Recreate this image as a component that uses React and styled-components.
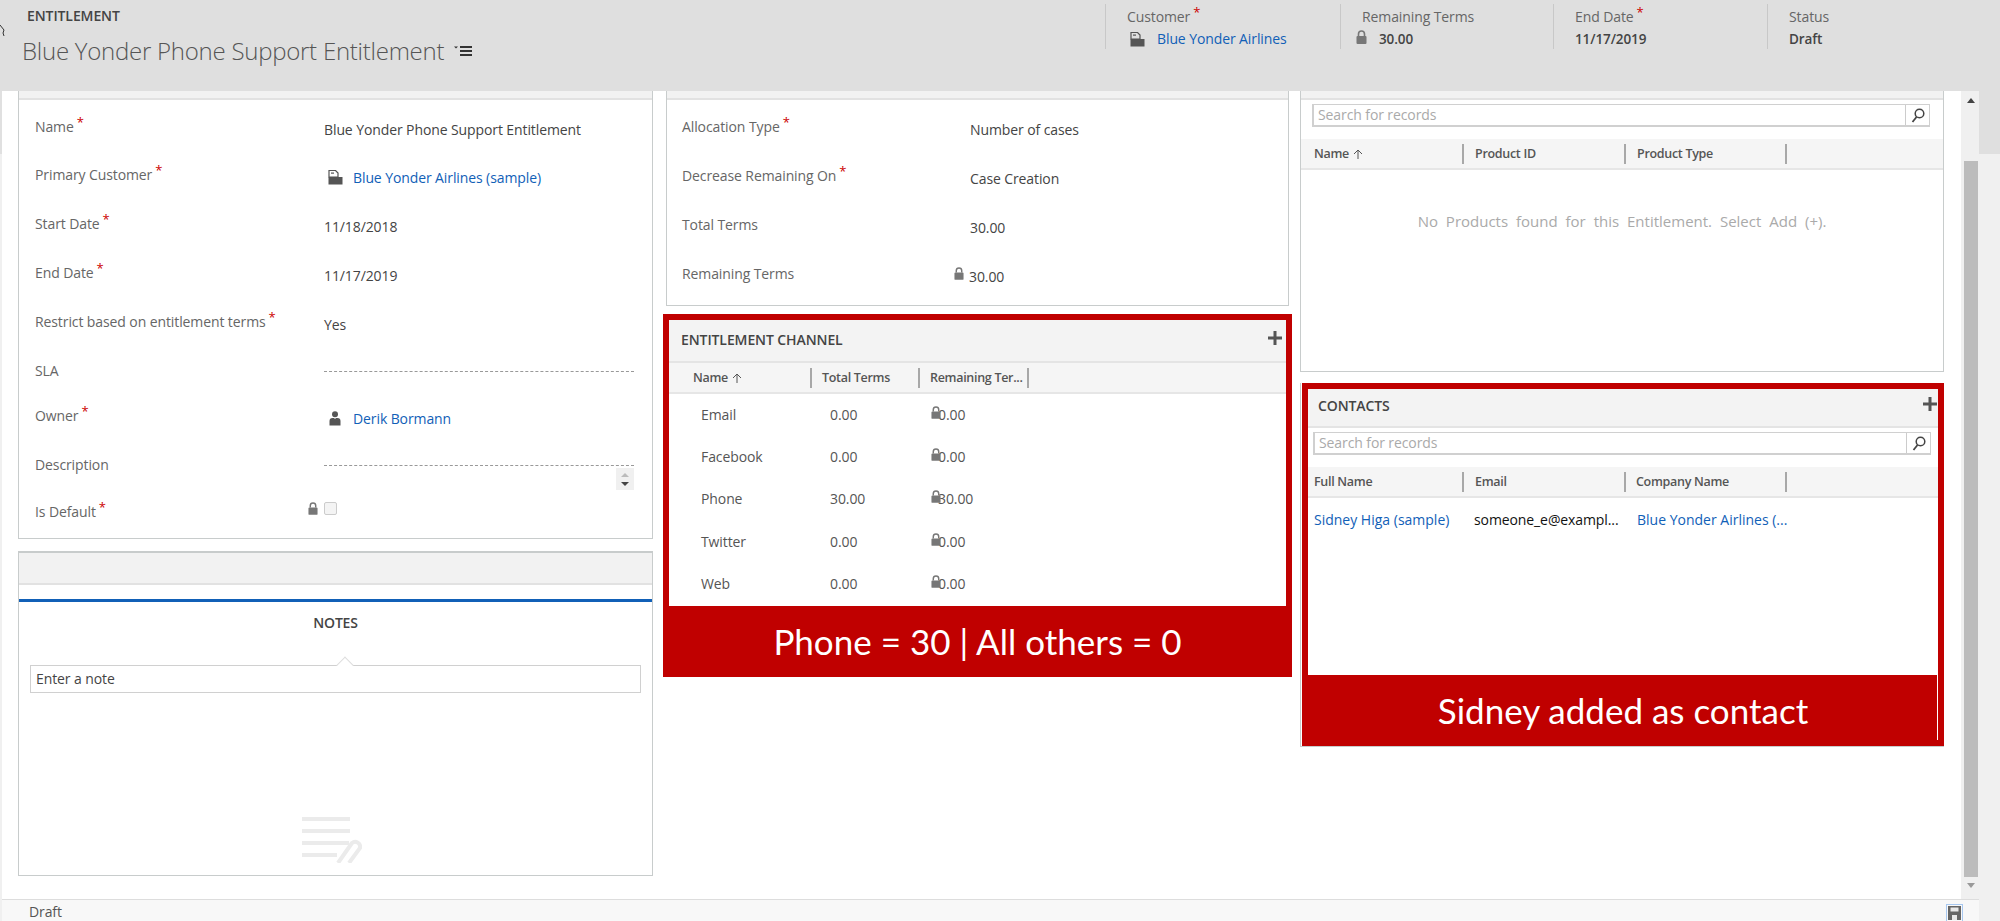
import React from 'react';
import styled, { createGlobalStyle } from 'styled-components';

const Global = createGlobalStyle`
  html, body { margin: 0; padding: 0; background: #fff; overflow: hidden; }
  * { box-sizing: border-box; }
  body { font-family: "Open Sans", "Noto Sans", sans-serif; font-size: 14px; color: #444; }
`;

const Page = styled.div`width: 2000px; height: 921px; display: flex; flex-direction: column; overflow: hidden;`;
const Header = styled.header`height: 91px; flex: none; background: #dfdfdf; display: flex; justify-content: space-between; position: relative;`;
const HeaderLeft = styled.div`padding: 7px 0 0 22px;`;
const EntityType = styled.div`font-size: 14px; font-weight: 600; color: #444; line-height: 18px; padding-left: 5px; letter-spacing: -0.1px;`;
const TitleRow = styled.div`display: flex; align-items: center; gap: 10px; margin-top: 9px;`;
const Title = styled.h1`margin: 0; font-size: 24px; font-weight: 300; color: #555; line-height: 34px; letter-spacing: -0.25px;`;
const HeaderFields = styled.div`display: flex; padding-top: 4px; height: 49px;`;
const HeaderField = styled.div`width: ${p => p.$w}px; border-left: 1px solid #c8c8c8; padding-left: 21px;`;
const HeaderLabel = styled.div`font-size: 14px; color: #666; line-height: 18px; margin-top: 4px; letter-spacing: -0.1px;`;
const HeaderValue = styled.div`display: flex; align-items: center; font-size: 13.5px; font-weight: 600; color: #444; line-height: 20px; margin-top: 3px; letter-spacing: -0.1px;`;
const HeaderLink = styled.span`font-weight: 400; font-size: 14px; color: #1160b7; margin-left: 12px;`;
const HeaderIcon = styled.span`display: flex; margin-left: 3px;`;
const HeaderLock = styled.span`display: flex; margin: -5px 12px 0 -6px;`;
const Req = styled.sup`color: #c00; font-size: 13px; line-height: 0; margin-left: 3px; font-weight: 400; vertical-align: 5px;`;
const Cursor = styled.svg`position: absolute; left: 0; top: 25px;`;

const Shell = styled.div`flex: 1; min-height: 0; display: flex;`;
const Strip = styled.div`width: 2px; flex: none; background: linear-gradient(#e0e0e0 0 63px, #f0f0f0 63px);`;
const Center = styled.div`flex: 1; min-width: 0; display: flex; flex-direction: column;`;
const Gutter = styled.div`width: 21px; flex: none; background: linear-gradient(#dfdfdf 0 63px, #f0f0f0 63px);`;
const Scroller = styled.div`flex: 1; min-height: 0; display: flex;`;
const Content = styled.main`flex: 1; min-width: 0; display: flex; padding-left: 16px; overflow: hidden;`;
const Column = styled.div`width: ${p => p.$w}px; flex: none; display: flex; flex-direction: column; margin-left: ${p => p.$ml || 0}px;`;

const ScrollTrack = styled.div`width: 18px; flex: none; background: #f0f0f0; display: flex; flex-direction: column; align-items: center; padding-left: 1px;`;
const ScrollThumb = styled.div`width: 14px; height: 716px; background: #bcbcbc; margin-top: 58px;`;
const ArrowUp = styled.div`margin-top: 7px; width: 0; height: 0; border-left: 4px solid transparent; border-right: 4px solid transparent; border-bottom: 5px solid #444;`;
const ArrowDown = styled.div`margin-top: 6px; width: 0; height: 0; border-left: 4px solid transparent; border-right: 4px solid transparent; border-top: 5px solid #999;`;

const Status = styled.footer`height: 22px; flex: none; background: #f8f8f8; border-top: 1px solid #ddd; display: flex; justify-content: space-between; padding: 0 16px 0 27px; font-size: 14px; line-height: 24px; color: #555; letter-spacing: -0.1px;`;
const SaveBtn = styled.div`width: 17px; height: 18px; margin-top: 4px; border: 1px solid #a8c8f0; display: flex; align-items: center; justify-content: center;`;

const Panel = styled.section`border: 1px solid #c8cccc; border-top: none; background: #fff; height: ${p => p.$h}px; flex: none; overflow: hidden;`;
const TopBar = styled.div`height: 9px; background: #f2f2f2; border-bottom: 2px solid #e2e2e2;`;
const Form = styled.div`padding: 17px 0 0 ${p => p.$pl}px;`;
const Row = styled.div`display: grid; grid-template-columns: ${p => p.$label}px 1fr; height: ${p => p.$h || 49}px;`;
const Label = styled.div`font-size: 14px; color: #666; line-height: 20px; letter-spacing: -0.1px; white-space: nowrap;`;
const Value = styled.div`display: flex; align-items: center; gap: ${p => p.$gap || 0}px; height: 20px; margin-top: 2px; font-size: 14px; color: #444; letter-spacing: -0.1px; position: relative; margin-left: ${p => p.$ml || 0}px;`;
const Link = styled.span`color: #1160b7;`;
const Dashed = styled.div`border-top: 1px dashed #999; height: 0; margin: 10px 18px 0 0;`;
const Spinner = styled.div`position: absolute; right: 18px; top: 13px; width: 18px; height: 22px; background: #f0f0f0; display: flex; flex-direction: column; align-items: center; gap: 5px; padding-top: 5px;`;
const SpinUp = styled.div`width: 0; height: 0; border-left: 4px solid transparent; border-right: 4px solid transparent; border-bottom: 4px solid #bbb;`;
const SpinDown = styled.div`width: 0; height: 0; border-left: 4px solid transparent; border-right: 4px solid transparent; border-top: 4px solid #444;`;
const Check = styled.div`width: 13px; height: 13px; border: 1px solid #ccc; border-radius: 2px; background: #f4f4f4; margin-top: -11px;`;
const LabelLock = styled.div`display: flex; justify-content: space-between; padding-right: 6px;`;
const DescField = styled.div`position: relative;`;
const LockLift = styled.span`display: flex; margin-top: -6px;`;

const NotesPanel = styled.section`margin-top: 12px; height: 325px; flex: none; border: 1px solid #c8cccc; border-top-width: 2px; background: #fff;`;
const NotesHead = styled.div`height: 32px; background: #f2f2f2; border-bottom: 2px solid #e2e2e2;`;
const NotesTabLine = styled.div`height: 3px; background: #1160b7; margin-top: 14px;`;
const NotesTitle = styled.div`text-align: center; font-size: 14px; font-weight: 600; color: #444; line-height: 18px; margin-top: 12px; letter-spacing: -0.2px;`;
const NotesInputWrap = styled.div`margin: 33px 11px 0; position: relative;`;
const NotesInput = styled.div`height: 28px; border: 1px solid #d0d0d0; padding-left: 5px; font-size: 14px; line-height: 26px; color: #444; letter-spacing: -0.1px;`;
const Notch = styled.div`position: absolute; left: 309px; top: -6px; width: 12px; height: 12px; background: #fff; border-left: 1px solid #ddd; border-top: 1px solid #ddd; transform: rotate(45deg);`;
const NotesIconWrap = styled.div`display: flex; justify-content: center; margin-top: 124px; padding-right: 7px;`;

const Callout = styled.section`margin: ${p => p.$top}px ${p => p.$right}px 0 ${p => p.$left}px; height: ${p => p.$h}px; flex: none; background: #c00000; padding: 6px 6px 0; display: flex; flex-direction: column;`;
const CalloutBody = styled.div`flex: 1; min-height: 0; background: #fff;`;
const CalloutCaption = styled.div`height: 71px; margin: 0 -6px; padding-bottom: 2px; display: flex; align-items: center; justify-content: center; color: #fff; font-family: Lato, sans-serif; font-size: 35px; flex: none;`;
const SubHead = styled.div`height: ${p => p.$h}px; background: #f3f3f3; border-bottom: 2px solid #e4e4e4; display: flex; justify-content: space-between; padding: ${p => p.$pt}px ${p => p.$pr}px 0 ${p => p.$pl}px;`;
const SubTitle = styled.div`font-size: 14px; font-weight: 600; color: #444; line-height: 18px; letter-spacing: -0.1px;`;
const PlusBtn = styled.div`width: 14px; height: 14px; margin-top: ${p => p.$mt}px;`;

const ColHead = styled.div`height: 31px; background: #f5f5f5; border-bottom: 2px solid #e6e6e6; display: flex; align-items: center; margin-top: ${p => p.$mt || 0}px; margin-bottom: ${p => p.$mb || 0}px;`;
const ColCell = styled.div`width: ${p => p.$w}px; height: 20px; border-right: 2px solid #a8a8a8; padding-left: ${p => p.$pl || 0}px; display: flex; align-items: center; gap: 4px; font-size: 12.5px; font-weight: 600; color: #555; letter-spacing: -0.3px; white-space: nowrap;`;

const ChannelRow = styled.div`display: flex; height: 42.4px; align-items: center; font-size: 14px; color: #555; letter-spacing: -0.1px;`;
const RowName = styled.div`width: 161px; padding-left: 32px;`;
const RowTotal = styled.div`width: 101px;`;
const RowRemain = styled.div`display: flex; align-items: center;`;
const OverLock = styled.span`display: block; width: 7px; height: 13px; margin-top: -8px; position: relative; z-index: 1;`;

const SearchBar = styled.div`margin: 4px ${p => p.$mr}px 0 ${p => p.$ml}px; height: 23px; border: solid #d0d0d0; border-width: 1px 1px 2px 2px; display: flex; background: #fff;`;
const SearchHint = styled.div`flex: 1; font-size: 14px; color: #aaa; line-height: 20px; padding-left: 4px; letter-spacing: -0.1px;`;
const SearchBtn = styled.div`width: 24px; border-left: 1px solid #ccc; display: flex; align-items: center; justify-content: center; background: #fff;`;
const Empty = styled.div`text-align: center; font-size: 15px; color: #aaa; margin-top: 42px; line-height: 18px; word-spacing: 4px;`;
const ContactRow = styled.div`display: flex; height: 42px; align-items: center; font-size: 14px; letter-spacing: -0.1px; padding-left: 6px;`;
const ContactCell = styled.div`width: ${p => p.$w}px; color: ${p => p.$link ? '#1160b7' : '#111'}; white-space: nowrap; letter-spacing: ${p => p.$link ? 0 : -0.1}px;`;
const ContactsFrame = styled.div`position: relative; margin-top: 11px; border-left: 1px solid #c8cccc; border-bottom: 1px solid #c8cccc;`;
const RightLine = styled.div`position: absolute; right: 6px; bottom: 6px; width: 1px; height: 65px; background: #fff;`;

const Lock = ({ w = 11, h = 14, c = '#777' }) => (
  <svg width={w} height={h} viewBox="0 0 11 14"><path d="M2.5 6V4a3 3 0 0 1 6 0v2" fill="none" stroke={c} strokeWidth="1.6" /><rect x="0.5" y="6" width="10" height="8" rx="1" fill={c} /></svg>
);
const Building = ({ c = '#555' }) => (
  <svg width="15" height="15" viewBox="0 0 15 15"><path d="M1 0.5h6.5l2.5 2.5v4H1z" fill="none" stroke={c} strokeWidth="1.2" /><rect x="3" y="2.5" width="3" height="1.2" fill={c} /><rect x="0.5" y="7" width="14" height="7.5" fill={c} /></svg>
);
const User = () => (
  <svg width="12" height="15" viewBox="0 0 12 15"><circle cx="6" cy="3.2" r="3" fill="#555" /><path d="M0.5 14.5V10a3 3 0 0 1 3-3H5l1 1 1-1h1.5a3 3 0 0 1 3 3v4.5z" fill="#555" /></svg>
);
const ListIcon = () => (
  <svg width="19" height="12" viewBox="0 0 19 12"><path d="M0 1.5h4L2 3.5z" fill="#333" /><rect x="6" y="1" width="12" height="2" fill="#333" /><rect x="6" y="5" width="12" height="2" fill="#333" /><rect x="6" y="9" width="12" height="2" fill="#333" /></svg>
);
const Plus = () => (
  <svg width="14" height="14" viewBox="0 0 14 14"><path d="M5.5 0h3v5.5H14v3H8.5V14h-3V8.5H0v-3h5.5z" fill="#555" /></svg>
);
const Search = () => (
  <svg width="14" height="15" viewBox="0 0 14 15"><circle cx="8.5" cy="5.5" r="4.3" fill="none" stroke="#444" strokeWidth="1.5" /><path d="M5.5 9L1.5 14" stroke="#444" strokeWidth="1.8" /></svg>
);
const SortArrow = () => (
  <svg width="10" height="10" viewBox="0 0 10 10"><path d="M5 10V1M1 5l4-4 4 4" fill="none" stroke="#555" strokeWidth="1" /></svg>
);
const Save = () => (
  <svg width="13" height="14" viewBox="0 0 13 14"><path d="M0 0h13v14H0z" fill="#666" /><rect x="2.5" y="1.5" width="8" height="4" fill="#e8e8e8" /><rect x="4" y="9" width="5" height="5" fill="#e8e8e8" /></svg>
);
const NoteGlyph = () => (
  <svg width="60" height="46" viewBox="0 0 60 46"><g fill="#ebebeb"><rect x="0" y="0" width="48" height="4" /><rect x="0" y="12" width="48" height="4" /><rect x="0" y="24" width="47" height="4" /><rect x="0" y="36" width="35" height="4" /></g><path d="M36 46l14-20a5 5 0 0 1 8 5L47 46" fill="none" stroke="#ebebeb" strokeWidth="4" /></svg>
);

const leftRows = [
  { label: 'Name', req: true, value: 'Blue Yonder Phone Support Entitlement', h: 48 },
  { label: 'Primary Customer', req: true, link: 'Blue Yonder Airlines (sample)', icon: <Building />, h: 49, ml: 4, gap: 10 },
  { label: 'Start Date', req: true, value: '11/18/2018', h: 49 },
  { label: 'End Date', req: true, value: '11/17/2019', h: 49 },
  { label: 'Restrict based on entitlement terms', req: true, value: 'Yes', h: 49 },
  { label: 'SLA', dashed: true, h: 45 },
  { label: 'Owner', req: true, link: 'Derik Bormann', icon: <User />, h: 49, ml: 5, gap: 12 },
  { label: 'Description', dashed: true, spin: true, h: 47 },
];
const midRows = [
  { label: 'Allocation Type', req: true, value: 'Number of cases' },
  { label: 'Decrease Remaining On', req: true, value: 'Case Creation' },
  { label: 'Total Terms', value: '30.00' },
];
const channels = [['Email', '0.00'], ['Facebook', '0.00'], ['Phone', '30.00'], ['Twitter', '0.00'], ['Web', '0.00']];
const headerFields = [
  { w: 235, label: 'Customer', req: true, value: <><HeaderIcon><Building /></HeaderIcon><HeaderLink>Blue Yonder Airlines</HeaderLink></> },
  { w: 213, label: 'Remaining Terms', value: <><HeaderLock><Lock w={11} h={14} /></HeaderLock>30.00</> },
  { w: 214, label: 'End Date', req: true, value: '11/17/2019' },
  { w: 233, label: 'Status', value: 'Draft' },
];

const FormRow = ({ r, labelW }) => (
  <Row $label={labelW} $h={r.h}>
    <Label>{r.label}{r.req && <Req>*</Req>}</Label>
    {r.dashed ? (
      <DescField><Dashed />{r.spin && <Spinner><SpinUp /><SpinDown /></Spinner>}</DescField>
    ) : (
      <Value $gap={r.gap} $ml={r.ml}>
        {r.icon}
        {r.link ? <Link>{r.link}</Link> : r.value}
      </Value>
    )}
  </Row>
);

export default function App() {
  return (
    <Page>
      <Global />
      <Header>
        <Cursor width="5" height="12" viewBox="0 0 5 12"><path d="M0 0l4 5-1 3 1 3" fill="none" stroke="#333" /></Cursor>
        <HeaderLeft>
          <EntityType>ENTITLEMENT</EntityType>
          <TitleRow><Title>Blue Yonder Phone Support Entitlement</Title><ListIcon /></TitleRow>
        </HeaderLeft>
        <HeaderFields>
          {headerFields.map(f => (
            <HeaderField key={f.label} $w={f.w}>
              <HeaderLabel>{f.label}{f.req && <Req>*</Req>}</HeaderLabel>
              <HeaderValue>{f.value}</HeaderValue>
            </HeaderField>
          ))}
        </HeaderFields>
      </Header>
      <Shell>
        <Strip />
        <Center>
          <Scroller>
            <Content>
              <Column $w={635}>
                <Panel $h={448}>
                  <TopBar />
                  <Form $pl={16}>
                    {leftRows.map(r => <FormRow key={r.label} r={r} labelW={289} />)}
                    <Row $label={289}>
                      <LabelLock><Label>Is Default<Req>*</Req></Label><Lock w={10} h={13} /></LabelLock>
                      <Value><Check /></Value>
                    </Row>
                  </Form>
                </Panel>
                <NotesPanel>
                  <NotesHead />
                  <NotesTabLine />
                  <NotesTitle>NOTES</NotesTitle>
                  <NotesInputWrap><NotesInput>Enter a note</NotesInput><Notch /></NotesInputWrap>
                  <NotesIconWrap><NoteGlyph /></NotesIconWrap>
                </NotesPanel>
              </Column>
              <Column $w={623} $ml={13}>
                <Panel $h={215}>
                  <TopBar />
                  <Form $pl={15}>
                    {midRows.map(r => <FormRow key={r.label} r={r} labelW={288} />)}
                    <Row $label={272}>
                      <Label>Remaining Terms</Label>
                      <Value $gap={5}><LockLift><Lock w={10} h={13} /></LockLift>30.00</Value>
                    </Row>
                  </Form>
                </Panel>
                <Callout $top={8} $left={-3} $right={-3} $h={363}>
                  <CalloutBody>
                    <SubHead $h={43} $pt={11} $pr={4} $pl={12}><SubTitle>ENTITLEMENT CHANNEL</SubTitle><PlusBtn $mt={-1}><Plus /></PlusBtn></SubHead>
                    <ColHead $mb={-1}>
                      <ColCell $w={143} $pl={24}>Name <SortArrow /></ColCell>
                      <ColCell $w={108} $pl={10}>Total Terms</ColCell>
                      <ColCell $w={109} $pl={10}>Remaining Ter...</ColCell>
                    </ColHead>
                    {channels.map(([n, v]) => (
                      <ChannelRow key={n}>
                        <RowName>{n}</RowName>
                        <RowTotal>{v}</RowTotal>
                        <RowRemain><OverLock><Lock w={10} h={13} /></OverLock>{v}</RowRemain>
                      </ChannelRow>
                    ))}
                  </CalloutBody>
                  <CalloutCaption>Phone = 30 | All others = 0</CalloutCaption>
                </Callout>
              </Column>
              <Column $w={644} $ml={11}>
                <Panel $h={281}>
                  <TopBar />
                  <SearchBar $ml={11} $mr={13}><SearchHint>Search for records</SearchHint><SearchBtn><Search /></SearchBtn></SearchBar>
                  <ColHead $mt={12}>
                    <ColCell $w={163} $pl={13}>Name <SortArrow /></ColCell>
                    <ColCell $w={162} $pl={11}>Product ID</ColCell>
                    <ColCell $w={161} $pl={11}>Product Type</ColCell>
                  </ColHead>
                  <Empty>No Products found for this Entitlement. Select Add (+).</Empty>
                </Panel>
                <ContactsFrame>
                  <Callout $top={0} $left={1} $right={0} $h={363}>
                    <CalloutBody>
                      <SubHead $h={39} $pt={8} $pr={1} $pl={10}><SubTitle>CONTACTS</SubTitle><PlusBtn $mt={-1}><Plus /></PlusBtn></SubHead>
                      <SearchBar $ml={5} $mr={7}><SearchHint>Search for records</SearchHint><SearchBtn><Search /></SearchBtn></SearchBar>
                      <ColHead $mt={12}>
                        <ColCell $w={156} $pl={6}>Full Name</ColCell>
                        <ColCell $w={162} $pl={11}>Email</ColCell>
                        <ColCell $w={161} $pl={10}>Company Name</ColCell>
                      </ColHead>
                      <ContactRow>
                        <ContactCell $w={160} $link>Sidney Higa (sample)</ContactCell>
                        <ContactCell $w={163}>someone_e@exampl...</ContactCell>
                        <ContactCell $link>Blue Yonder Airlines (...</ContactCell>
                      </ContactRow>
                    </CalloutBody>
                    <CalloutCaption>Sidney added as contact</CalloutCaption>
                  </Callout>
                  <RightLine />
                </ContactsFrame>
              </Column>
            </Content>
            <ScrollTrack>
              <ArrowUp />
              <ScrollThumb />
              <ArrowDown />
            </ScrollTrack>
          </Scroller>
          <Status>
            <span>Draft</span>
            <SaveBtn><Save /></SaveBtn>
          </Status>
        </Center>
        <Gutter />
      </Shell>
    </Page>
  );
}
